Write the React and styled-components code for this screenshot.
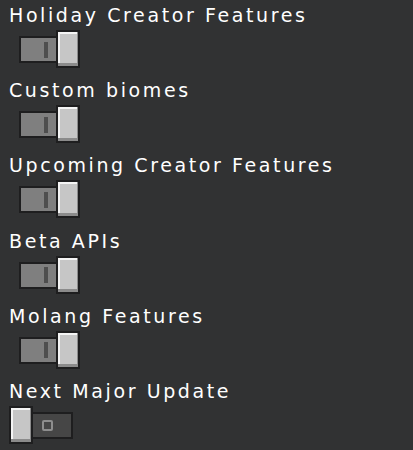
import React, { useState } from "react";
import styled, { createGlobalStyle } from "styled-components";

const GlobalStyle = createGlobalStyle`
  html, body {
    margin: 0;
    padding: 0;
    background: #313233;
  }
  body {
    font-family: "DejaVu Sans", "Liberation Sans", sans-serif;
  }
`;

const experiments = [
  { label: "Holiday Creator Features", on: true },
  { label: "Custom biomes", on: true },
  { label: "Upcoming Creator Features", on: true },
  { label: "Beta APIs", on: true },
  { label: "Molang Features", on: true },
  { label: "Next Major Update", on: false },
];

const Toggle = ({ on, onClick }) => {
  return (
    <ToggleWrap onClick={onClick} role="switch" aria-checked={on}>
      <Track $on={on}>
        {on ? <OnMark /> : <OffMark />}
      </Track>
      <Knob $on={on} />
    </ToggleWrap>
  );
};

const App = () => {
  const [items, setItems] = useState(experiments);

  const flip = (i) =>
    setItems((prev) => prev.map((it, idx) => (idx === i ? { ...it, on: !it.on } : it)));

  return (
    <>
      <GlobalStyle />
      <Panel>
        {items.map((it, i) => (
          <Row key={it.label}>
            <Label>{it.label}</Label>
            <Toggle on={it.on} onClick={() => flip(i)} />
          </Row>
        ))}
      </Panel>
    </>
  );
};

const Panel = styled.div`
  width: 413px;
  height: 450px;
  box-sizing: border-box;
  padding-left: 9px;
  overflow: hidden;
  background: #313233;
`;

const Row = styled.div`
  display: flex;
  flex-direction: column;
  align-items: flex-start;
  height: 75.2px;
`;

const Label = styled.div`
  height: 30px;
  line-height: 30px;
  font-size: 19px;
  letter-spacing: 2.6px;
  color: #ffffff;
  white-space: nowrap;
`;

const ToggleWrap = styled.div`
  position: relative;
  width: 71px;
  height: 38px;
  cursor: pointer;
`;

const Track = styled.div`
  position: absolute;
  left: 10px;
  top: 6px;
  width: 54px;
  height: 27px;
  box-sizing: border-box;
  border: 2px solid #1e1e1f;
  background: ${(p) => (p.$on ? "#7f7f7f" : "#464646")};
  display: flex;
  align-items: center;
  justify-content: center;
  padding-left: ${(p) => (p.$on ? "0" : "3px")};
`;

const OnMark = styled.span`
  display: block;
  width: 4px;
  height: 16px;
  background: #4e4e4e;
`;

const OffMark = styled.span`
  display: block;
  width: 11px;
  height: 11px;
  box-sizing: border-box;
  border: 2px solid #8e8e8e;
  border-radius: 2px;
`;

const Knob = styled.div`
  position: absolute;
  top: 0;
  ${(p) => (p.$on ? "right: 0;" : "left: 0;")}
  width: 24px;
  height: 38px;
  box-sizing: border-box;
  border: 2px solid #1e1e1f;
  background: #c6c6c6;
  box-shadow: inset 0 -3px 0 #8b8b8b, inset -1px 0 0 #8b8b8b, inset 2px 2px 0 #f4f4f4;
`;

export default App;
